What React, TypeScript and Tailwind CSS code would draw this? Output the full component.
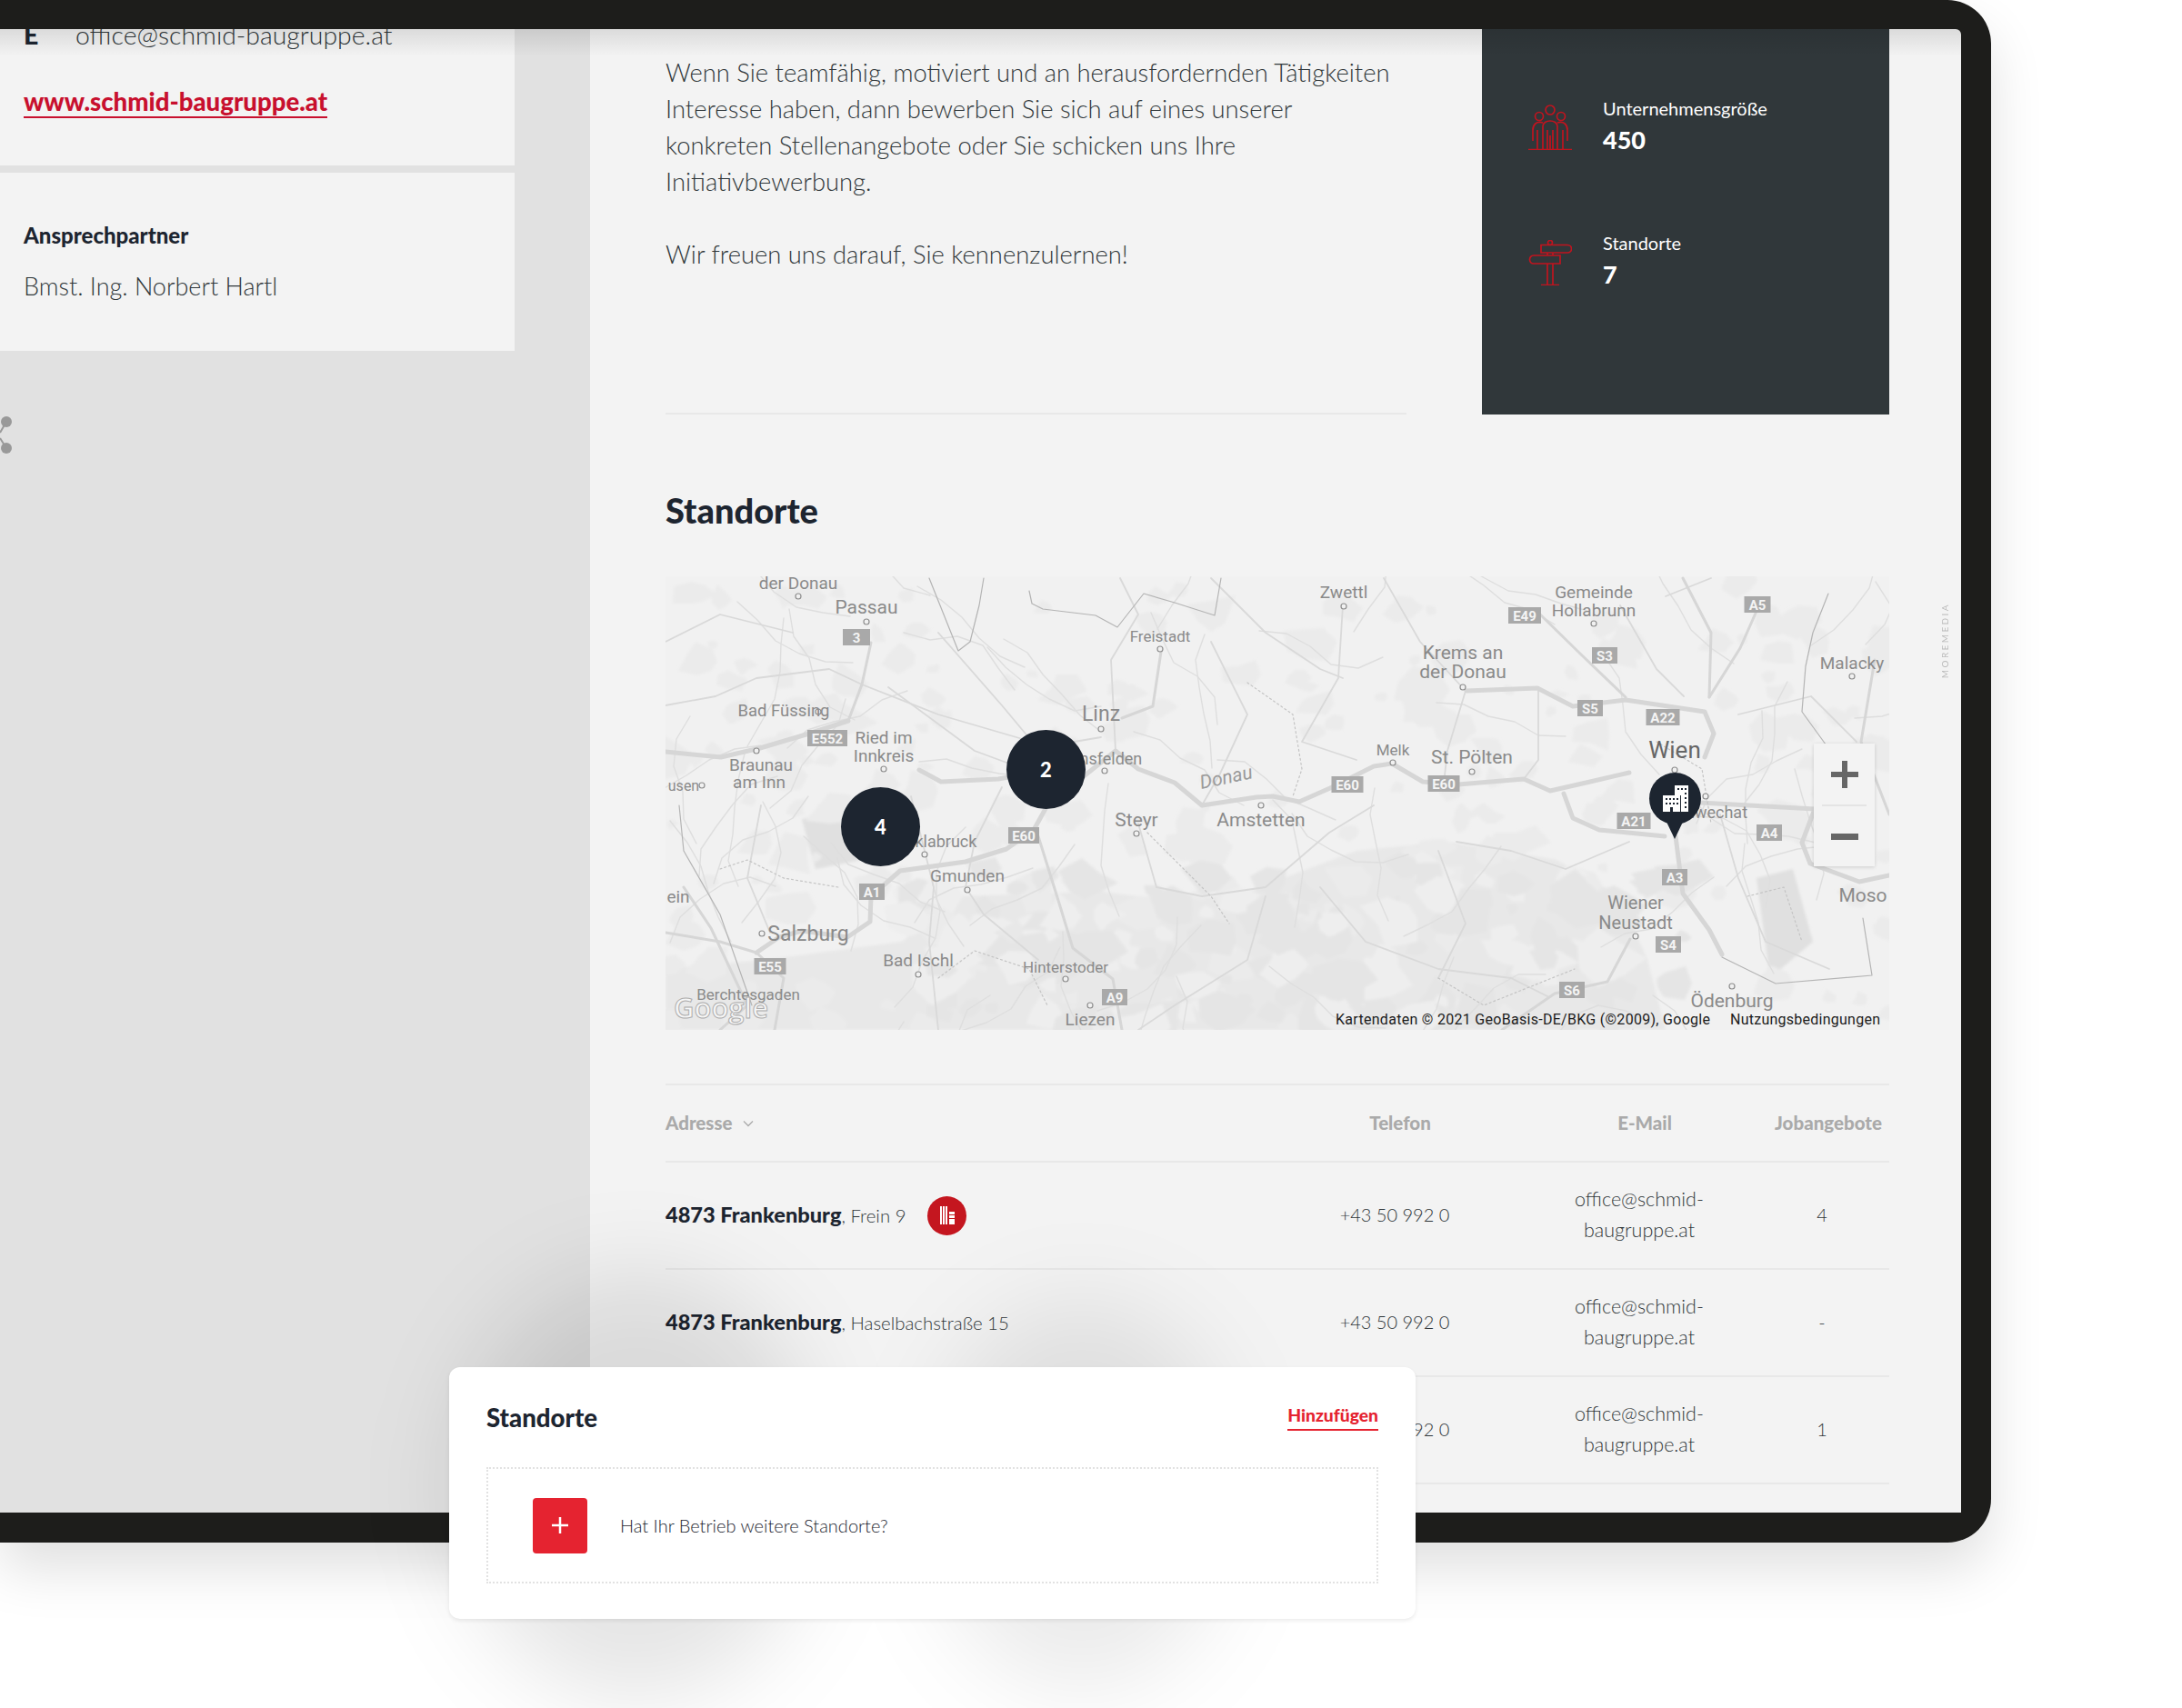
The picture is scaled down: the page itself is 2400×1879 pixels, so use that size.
const mainRoads = [
  'M100 412 L125 395 L150 388 L200 395 L225 378 L226 350 L258 322 L330 312 L375 298 L405 277 L420 250 L470 210 L495 190 L520 210 L560 225 L590 250 L650 241 L668 240 L697 246 L731 231 L779 207 L799 204 L833 224 L872 227 L944 221 L973 234 L1017 224 L1060 214',
  'M279 211 L303 224 L366 221 L405 214',
  'M881 124 L959 121 L998 141 L1056 134 L1143 147 L1153 171 L1143 197',
  'M988 237 L998 264 L1027 277 L1099 284',
  'M1138 247 L1264 254 L1250 291 L1259 314 L1313 334 L1346 327',
  'M1111 284 L1119 347 L1148 387 L1162 414',
  'M0 191 L61 197 L104 187 L158 171 L201 157',
]

const midRoads = [
  'M226 71 L216 117 L201 157',
  'M545 81 L536 141 L502 154',
  'M410 284 L434 361 L448 407 L492 441 L502 497',
  'M959 37 L1007 84 L1056 131',
  'M1201 34 L1182 77 L1148 131',
  'M1061 397 L1036 444 L978 457 L920 497',
  'M1119 0 L1150 60 L1148 131',
  'M20 340 L50 385 L90 470 L60 497',
  'M0 390 L60 400 L100 412 L130 440 L120 497',
  'M1330 90 L1315 180 L1346 260',
]

const thinRoads = [
  'M0 140 L55 130 L100 110 L180 100 L216 117 L300 150 L420 185 L479 175',
  'M245 120 L340 190 L405 214',
  'M300 60 L370 140 L420 200',
  'M495 190 L490 90 L520 40 L500 0',
  'M600 70 L640 150 L610 215 L590 250',
  'M270 240 L295 340 L290 400 L300 497',
  'M105 250 L90 330 L115 390',
  'M370 230 L340 290 L330 340 L350 370 L410 420',
  'M520 270 L540 340 L590 350 L660 340 L730 280 L779 250',
  'M745 30 L740 110 L700 180 L760 200',
  'M790 0 L830 70 L880 124 L860 190 L856 226',
  'M960 120 L960 200 L944 221',
  'M870 290 L930 300 L990 320 L1060 290',
  'M660 350 L640 420 L560 470 L520 497',
  'M720 340 L770 400 L850 430 L930 440 L970 460',
  'M850 300 L880 380 L850 440',
  'M1050 30 L1090 100 L1120 130',
  'M1180 150 L1260 130 L1310 180',
  'M1160 260 L1180 330 L1210 400 L1280 430',
  'M1100 20 L1150 0',
  'M600 0 L660 60 L720 100 L745 110',
  'M140 60 L60 40 L0 70',
]

const borderLines = [
  'M400 14 L403 28 L415 34 L473 41 L497 54 L526 17 L560 27 L604 41 L611 0',
  'M1279 17 L1262 60 L1254 97 L1250 147 L1279 187',
  'M1317 374 L1327 437 L1221 446 L1162 417',
  'M290 0 L322 80 L335 70 L345 30 L350 0',
  'M15 250 L20 300 L60 370 L95 470',
]

const dottedLines = [
  'M60 320 L90 310 L130 330 L190 340',
  'M530 280 L600 350 L620 380',
  'M640 115 L690 150 L700 210 L690 240',
  'M1090 180 L1140 210 L1150 270',
  'M1190 350 L1230 340 L1250 400',
  'M850 440 L900 470 L1000 430',
  'M300 440 L340 410 L400 430 L420 470',
]

const labels = [
  { t: 'der Donau', x: 146, y: 12, s: 19 },
  { t: 'Passau', x: 221, y: 39, s: 21 },
  { t: 'Freistadt', x: 544, y: 70, s: 17 },
  { t: 'Bad Füssing', x: 130, y: 152, s: 18.5 },
  { t: 'Ried im', x: 240, y: 182, s: 19 },
  { t: 'Innkreis', x: 240, y: 202, s: 19 },
  { t: 'Braunau', x: 105, y: 212, s: 19 },
  { t: 'am Inn', x: 103, y: 231, s: 19 },
  { t: 'usen', x: 20, y: 234, s: 16 },
  { t: 'Linz', x: 479, y: 157, s: 23 },
  { t: 'Ansfelden', x: 484, y: 205, s: 18 },
  { t: 'Steyr', x: 518, y: 273, s: 21 },
  { t: 'Amstetten', x: 655, y: 273, s: 21 },
  { t: 'Vöcklabruck', x: 293, y: 296, s: 18 },
  { t: 'Gmunden', x: 332, y: 334, s: 19 },
  { t: 'ein', x: 14, y: 357, s: 19 },
  { t: 'Salzburg', x: 157, y: 399, s: 23 },
  { t: 'Bad Ischl', x: 278, y: 427, s: 19 },
  { t: 'Hinterstoder', x: 440, y: 434, s: 17 },
  { t: 'Berchtesgaden', x: 91, y: 464, s: 17 },
  { t: 'Liezen', x: 467, y: 492, s: 19 },
  { t: 'Zwettl', x: 746, y: 22, s: 19 },
  { t: 'Gemeinde', x: 1021, y: 22, s: 19 },
  { t: 'Hollabrunn', x: 1021, y: 42, s: 19 },
  { t: 'Krems an', x: 877, y: 89, s: 21 },
  { t: 'der Donau', x: 877, y: 110, s: 21 },
  { t: 'Malacky', x: 1305, y: 100, s: 19 },
  { t: 'Wien', x: 1110, y: 198, s: 26, dark: true },
  { t: 'Melk', x: 800, y: 195, s: 17 },
  { t: 'St. Pölten', x: 887, y: 204, s: 21 },
  { t: 'Schwechat', x: 1146, y: 264, s: 18 },
  { t: 'Moso', x: 1317, y: 356, s: 21 },
  { t: 'Wiener', x: 1067, y: 364, s: 20 },
  { t: 'Neustadt', x: 1067, y: 386, s: 20 },
  { t: 'Ödenburg', x: 1173, y: 472, s: 21 },
]

const towns = [
  [146, 20], [221, 48], [544, 78], [168, 147], [240, 210], [100, 190], [40, 228], [479, 166], [483, 212], [518, 281],
  [655, 250], [285, 304], [332, 343], [106, 391], [278, 436], [440, 441], [467, 470],
  [746, 31], [1021, 50], [877, 120], [1305, 108], [800, 203], [887, 213], [1110, 211],
  [1067, 394], [1173, 449], [1144, 240],
]

const shields = [
  { t: '3', x: 210, y: 65, w: 30 },
  { t: 'E552', x: 178, y: 176, w: 44 },
  { t: 'E60', x: 394, y: 283, w: 34 },
  { t: 'A1', x: 227, y: 345, w: 28 },
  { t: 'E55', x: 115, y: 427, w: 35 },
  { t: 'A9', x: 494, y: 461, w: 28 },
  { t: 'E49', x: 945, y: 41, w: 36 },
  { t: 'A5', x: 1201, y: 29, w: 29 },
  { t: 'S3', x: 1033, y: 85, w: 28 },
  { t: 'S5', x: 1017, y: 143, w: 28 },
  { t: 'A22', x: 1097, y: 153, w: 37 },
  { t: 'E60', x: 750, y: 227, w: 35 },
  { t: 'E60', x: 856, y: 226, w: 35 },
  { t: 'A21', x: 1065, y: 267, w: 37 },
  { t: 'A4', x: 1214, y: 280, w: 28 },
  { t: 'A3', x: 1110, y: 329, w: 28 },
  { t: 'S4', x: 1103, y: 403, w: 28 },
  { t: 'S6', x: 997, y: 453, w: 28 },
]

// small seeded generator so the patches on the map stay put between runs
let seed = 41
const rnd = () => {
  seed = (seed * 16807) % 2147483647
  return seed / 2147483647
}

const makePatch = (cx: number, cy: number, r: number) =>
  Array.from({ length: 7 }, (_, i) => {
    const a = (i / 7) * Math.PI * 2
    const d = r * (0.5 + rnd() * 0.8)
    return `${Math.round(cx + Math.cos(a) * d)},${Math.round(cy + Math.sin(a) * d * 0.8)}`
  }).join(' ')

const patches = Array.from({ length: 230 }, () => makePatch(rnd() * 1346, rnd() * 497, 6 + rnd() * 22))
const southPatches = Array.from({ length: 150 }, () => {
  const x = 260 + rnd() * 860
  return makePatch(x, 320 + rnd() * 177, 8 + rnd() * 26)
})

// wandering side roads, the reference is full of these
const sideRoads = Array.from({ length: 70 }, () => {
  let x = rnd() * 1346
  let y = rnd() * 497
  let a = rnd() * Math.PI * 2
  let d = `M${Math.round(x)} ${Math.round(y)}`
  for (let i = 0; i < 5; i++) {
    a += (rnd() - 0.5) * 1.2
    x += Math.cos(a) * 30
    y += Math.sin(a) * 30
    d += ` L${Math.round(x)} ${Math.round(y)}`
  }
  return d
})

const MapArt = () => (
  <svg viewBox="0 -2 1346 499" className="h-full w-full">
    <defs>
      <filter id="soft">
        <feGaussianBlur stdDeviation="1.6" />
      </filter>
    </defs>
    <rect y="-2" width="1346" height="499" fill="#f1f1f1" />
    <g filter="url(#soft)">
      <path
        d="M0 430 L110 420 L260 400 L320 350 L480 345 L560 355 L640 345 L760 300 L860 290 L980 310 L1050 350 L1080 420 L1100 497 L0 497 Z"
        fill="#e8e8e8"
      />
      <path d="M1200 330 L1240 320 L1262 400 L1215 440 Z" fill="#e0e0e0" />
      <path d="M150 265 L205 255 L215 310 L165 320 Z" fill="#e0e0e0" />
      {patches.map((p, i) => (
        <polygon key={i} points={p} fill="#ebebeb" />
      ))}
      {southPatches.map((p, i) => (
        <polygon key={i} points={p} fill={i % 3 === 0 ? '#eeeeee' : '#e5e5e5'} />
      ))}
    </g>
    <g fill="none" strokeLinejoin="round" strokeLinecap="round">
      {sideRoads.map((d, i) => (
        <path key={i} d={d} stroke="#dedede" strokeWidth="1.4" />
      ))}
      {thinRoads.map((d) => (
        <path key={d} d={d} stroke="#d9d9d9" strokeWidth="1.8" />
      ))}
      {midRoads.map((d) => (
        <path key={d} d={d} stroke="#d6d6d6" strokeWidth="3" />
      ))}
      {mainRoads.map((d) => (
        <path key={d} d={d} stroke="#d6d6d6" strokeWidth="5" />
      ))}
      {borderLines.map((d) => (
        <path key={d} d={d} stroke="#b4b4b4" strokeWidth="1.2" />
      ))}
      {dottedLines.map((d) => (
        <path key={d} d={d} stroke="#c4c4c4" strokeWidth="1.2" strokeDasharray="2 3" />
      ))}
    </g>
    {towns.map(([x, y]) => (
      <circle key={`${x}-${y}`} cx={x} cy={y} r="3" fill="#f1f1f1" stroke="#8f8f8f" strokeWidth="1.2" />
    ))}
    <g fontFamily="Roboto, sans-serif" textAnchor="middle">
      {labels.map((l) => (
        <text key={`${l.t}-${l.x}`} x={l.x} y={l.y} fontSize={l.s} fill={l.dark ? '#666666' : '#8a8a8a'}>
          {l.t}
        </text>
      ))}
      <text x="618" y="226" fontSize="21" fontStyle="italic" fill="#9a9a9a" transform="rotate(-12 618 226)">
        Donau
      </text>
      {shields.map((s) => (
        <g key={`${s.t}-${s.x}`}>
          <rect x={s.x - s.w / 2} y={s.y - 9} width={s.w} height="18" fill="#a9a9a9" />
          <text x={s.x} y={s.y + 5.5} fontSize="15" fontWeight="700" fill="#f4f4f4">
            {s.t}
          </text>
        </g>
      ))}
    </g>
    <text
      x="61"
      y="484"
      textAnchor="middle"
      fontFamily="'Open Sans', sans-serif"
      fontSize="31"
      fontWeight="600"
      fill="#f6f6f6"
      stroke="#adadad"
      strokeWidth="1"
    >
      Google
    </text>
    <g fontFamily="Roboto, sans-serif" fontSize="16" fill="#1c1c1c">
      <text x="737" y="491" textLength="412">
        Kartendaten © 2021 GeoBasis-DE/BKG (©2009), Google
      </text>
      <text x="1171" y="491" textLength="165">
        Nutzungsbedingungen
      </text>
    </g>
  </svg>
)

const PeopleIcon = () => (
  <svg viewBox="0 0 48 50" className="h-[50px] w-[48px] shrink-0" fill="none" stroke="#c0141f" strokeWidth="1.7">
    <circle cx="24" cy="6" r="5" />
    <circle cx="12" cy="13" r="4.5" />
    <circle cx="36" cy="13" r="4.5" />
    <path d="M16 49 V24 C16 16 32 16 32 24 V49" />
    <path d="M16 20 C9 18 5 22 5 28 V40 M32 20 C39 18 43 22 43 28 V40" />
    <path d="M10 49 V28 M38 49 V28 M21 49 V28 M27 49 V28 M24 49 V34" />
    <path d="M0 49.5 H48" />
  </svg>
)

const SignIcon = () => (
  <svg viewBox="0 0 48 50" className="h-[50px] w-[48px] shrink-0" fill="none" stroke="#c0141f" strokeWidth="1.7">
    <circle cx="24" cy="3" r="2.5" />
    <path d="M14 5.5 H43 C49 5.5 49 14 43 14 H14 Z" />
    <path d="M35 17 H6 C0 17 0 26 6 26 H35 Z" />
    <path d="M21 26 V49 M27 26 V49 M21 14 V17 M27 14 V17 M14 49.5 H34" />
  </svg>
)

const Building = ({ className }: { className: string }) => (
  <svg viewBox="0 0 28 29" className={className} fill="currentColor">
    <path
      fillRule="evenodd"
      d="M13 0 H28 V29 H20 V11 H13 Z M16 3 V5 H18 V3 Z M20 3 V5 H22 V3 Z M24 3 V5 H26 V3 Z M24 8 V10 H26 V8 Z M24 13 V15 H26 V13 Z M24 18 V20 H26 V18 Z M24 23 V25 H26 V23 Z"
    />
    <path
      fillRule="evenodd"
      d="M0 11 H19 V29 H11 V24 H8 V29 H0 Z M3 14 V16 H5 V14 Z M7 14 V16 H9 V14 Z M11 14 V16 H13 V14 Z M3 19 V21 H5 V19 Z M7 19 V21 H9 V19 Z M11 19 V21 H13 V19 Z M15 14 V16 H17 V14 Z M15 19 V21 H17 V19 Z"
    />
  </svg>
)

// narrow tower used in the red badge of the head office row
const Tower = () => (
  <svg viewBox="0 0 18 20" className="h-5 w-[18px]" fill="white">
    <path d="M1 0 H3 V20 H1 Z M4 0 H6 V20 H4 Z M7 0 H9 V20 H7 Z" />
    <path d="M11 6 H17 V9 H11 Z M11 10 H17 V13 H11 Z M11 14 H17 V20 H11 Z" />
  </svg>
)

const Cluster = ({ n, className }: { n: number; className: string }) => (
  <div
    className={`absolute flex h-[87px] w-[87px] items-center justify-center rounded-full bg-[#1d2530] text-[22px] font-black text-white ${className}`}
  >
    {n}
  </div>
)

const Row = ({ street, badge, jobs }: { street: string; badge?: boolean; jobs: string }) => (
  <div className="grid h-[118px] grid-cols-[678px_248px_290px_130px] items-center border-b-2 border-[#e8e8e8] text-[20px] font-light text-[#30373a]">
    <div className="flex items-center">
      <span className="text-[23.6px] font-black text-[#1d2530]">4873 Frankenburg</span>
      <span className="text-[20.4px]">, {street}</span>
      {badge && (
        <span className="ml-6 flex h-[43px] w-[43px] items-center justify-center rounded-full bg-[#c4161f]">
          <Tower />
        </span>
      )}
    </div>
    <div className="pb-[2px] text-center">+43 50 992 0</div>
    <div className="pb-[2px] text-center text-[21.5px] leading-[34px]">
      office@schmid-
      <br />
      baugruppe.at
    </div>
    <div className="pr-[18px] pb-[2px] text-center">{jobs}</div>
  </div>
)

export default function App() {
  return (
    <div className="relative h-[1879px] w-[2400px] overflow-hidden bg-white font-['Lato',sans-serif]">
      <div className="h-[1697px] w-[2190px] rounded-r-[48px] bg-[#1d1d1b] pt-8 pr-[33px] pb-[33px] shadow-[0_30px_60px_rgba(0,0,0,0.12)]">
        <div className="relative flex h-full overflow-hidden rounded-tr-md">
          <aside className="w-[649px] shrink-0 bg-[#e1e1e1]">
            <div className="flow-root h-[150px] w-[566px] bg-[#f3f3f3] pl-[26px]">
              <div className="-mt-[4px] flex text-[28.4px] leading-[20px] font-light text-[#30373a]">
                <span className="w-[57px] font-black text-[#1d2530]">E</span>
                office@schmid-baugruppe.at
              </div>
              <a className="mt-[47px] inline-block border-b-2 border-[#c8102e] text-[27.6px] leading-[33px] font-black text-[#c8102e]">
                www.schmid-baugruppe.at
              </a>
            </div>
            <div className="mt-2 h-[196px] w-[566px] bg-[#f3f3f3] pt-[55px] pl-[26px]">
              <div className="text-[24px] leading-[28px] font-black text-[#1d2530]">Ansprechpartner</div>
              <div className="mt-[28px] text-[27px] leading-[28px] font-light text-[#30373a]">
                Bmst. Ing. Norbert Hartl
              </div>
            </div>
            <svg viewBox="0 0 14 42" className="mt-[72px] h-[42px] w-[14px]" fill="#999999">
              <circle cx="7" cy="6" r="6" />
              <circle cx="7" cy="35" r="6" />
              <path d="M0 18 L7 6 M0 24 L7 35" stroke="#999999" strokeWidth="2" />
            </svg>
          </aside>

          <main className="min-w-0 flex-1 bg-[#f3f3f3] pr-[79px] pl-[83px]">
            <div className="flex justify-between">
              <div className="h-[424px] w-[815px] border-b-2 border-[#e8e8e8] pt-7 text-[27.4px] leading-[40px] font-light text-[#30373a]">
                <p>
                  Wenn Sie teamfähig, motiviert und an herausfordernden Tätigkeiten
                  <br />
                  Interesse haben, dann bewerben Sie sich auf eines unserer
                  <br />
                  konkreten Stellenangebote oder Sie schicken uns Ihre
                  <br />
                  Initiativbewerbung.
                </p>
                <p className="mt-10">Wir freuen uns darauf, Sie kennenzulernen!</p>
              </div>
              <div className="h-[424px] w-[448px] bg-[#30373a] pt-[72px] pl-[51px] text-white">
                <div className="flex gap-[34px]">
                  <div className="pt-[11px]">
                    <PeopleIcon />
                  </div>
                  <div>
                    <div className="text-[20px] leading-[30px] font-normal">Unternehmensgröße</div>
                    <div className="mt-[2px] text-[27px] leading-[36px] font-black">450</div>
                  </div>
                </div>
                <div className="mt-[80px] flex gap-[34px]">
                  <div className="pt-[12px]">
                    <SignIcon />
                  </div>
                  <div>
                    <div className="text-[20px] leading-[30px] font-normal">Standorte</div>
                    <div className="mt-[2px] text-[27px] leading-[36px] font-black">7</div>
                  </div>
                </div>
              </div>
            </div>

            <h2 className="mt-[83px] text-[38px] leading-[44px] font-black text-[#1d2530]">Standorte</h2>

            <div className="relative mt-[51px] h-[499px] overflow-hidden">
              <MapArt />
              <Cluster n={2} className="top-[169px] left-[375px]" />
              <Cluster n={4} className="top-[232px] left-[193px]" />
              <div className="absolute top-[216px] left-[1082px] flex h-[57px] w-[57px] items-center justify-center rounded-full bg-[#1d2530] text-white">
                <Building className="h-[29px] w-[28px]" />
                <span className="absolute top-[50px] left-[17px] h-0 w-0 border-x-[11px] border-t-[23px] border-x-transparent border-t-[#1d2530]" />
              </div>
              <div className="absolute top-[184px] left-[1263px] flex h-[135px] w-[67px] flex-col items-center bg-[#f3f3f3] shadow-[0_1px_4px_rgba(0,0,0,0.15)]">
                <svg viewBox="0 0 30 30" className="mt-[19px] h-[30px] w-[30px]" fill="#666666">
                  <path d="M12 0 H18 V12 H30 V18 H18 V30 H12 V18 H0 V12 H12 Z" />
                </svg>
                <div className="mt-[18px] h-0.5 w-[49px] bg-[#e4e4e4]" />
                <svg viewBox="0 0 30 7" className="mt-[30px] h-[7px] w-[30px]" fill="#666666">
                  <rect width="30" height="7" />
                </svg>
              </div>
            </div>

            <div className="mt-[59px] border-t-2 border-[#e8e8e8]">
              <div className="grid h-[85px] grid-cols-[678px_248px_290px_130px] items-center border-b-2 border-[#e8e8e8] text-[20.5px] font-black text-[#aaaaaa]">
                <div className="flex items-center gap-3">
                  Adresse
                  <svg viewBox="0 0 12 8" className="h-2 w-3" fill="none" stroke="#aaaaaa" strokeWidth="1.3">
                    <path d="M1 1.5 L6 6.5 L11 1.5" />
                  </svg>
                </div>
                <div className="pl-3 text-center">Telefon</div>
                <div className="pl-3 text-center">E-Mail</div>
                <div className="pr-1 text-center whitespace-nowrap">Jobangebote</div>
              </div>
              <Row street="Frein 9" badge jobs="4" />
              <Row street="Haselbachstraße 15" jobs="-" />
              <Row street="Bahnhofstraße 1" jobs="1" />
            </div>
          </main>

          <div className="absolute inset-x-0 top-0 h-[30px] bg-gradient-to-b from-black/10 to-transparent" />
          <div className="absolute top-[631px] right-[10px] text-[10px] tracking-[2.4px] text-[#bbbbbb]">
            <span className="block rotate-180 [writing-mode:vertical-rl]">MOREMEDIA</span>
          </div>
        </div>
      </div>

      <div className="absolute top-[1400px] left-[500px] h-[470px] w-[400px] rounded-[50%] bg-black/10 blur-[50px]" />
      <div className="absolute top-[1430px] left-[1020px] h-[430px] w-[340px] rounded-[50%] bg-black/[0.08] blur-[50px]" />

      <div className="absolute top-[1504px] left-[494px] h-[277px] w-[1063px] rounded-xl bg-white px-[41px] shadow-[0_2px_4px_rgba(0,0,0,0.08)]">
        <div className="flex h-[110px] items-start justify-between pt-[38px]">
          <div className="text-[27.6px] leading-[36px] font-black text-[#1d2530]">Standorte</div>
          <a className="border-b-2 border-[#e52330] text-[19.3px] leading-[30px] font-black text-[#e52330]">Hinzufügen</a>
        </div>
        <div className="flex h-[128px] items-center border-2 border-dotted border-[#e2e2e2] pl-[49px]">
          <div className="flex h-[61px] w-[60px] items-center justify-center rounded bg-[#e52330]">
            <svg viewBox="0 0 20 20" className="h-5 w-5" fill="none" stroke="white" strokeWidth="2.5">
              <path d="M10 1 V19 M1 10 H19" />
            </svg>
          </div>
          <div className="ml-9 text-[20px] font-light text-[#1d2530]">Hat Ihr Betrieb weitere Standorte?</div>
        </div>
      </div>
    </div>
  )
}
